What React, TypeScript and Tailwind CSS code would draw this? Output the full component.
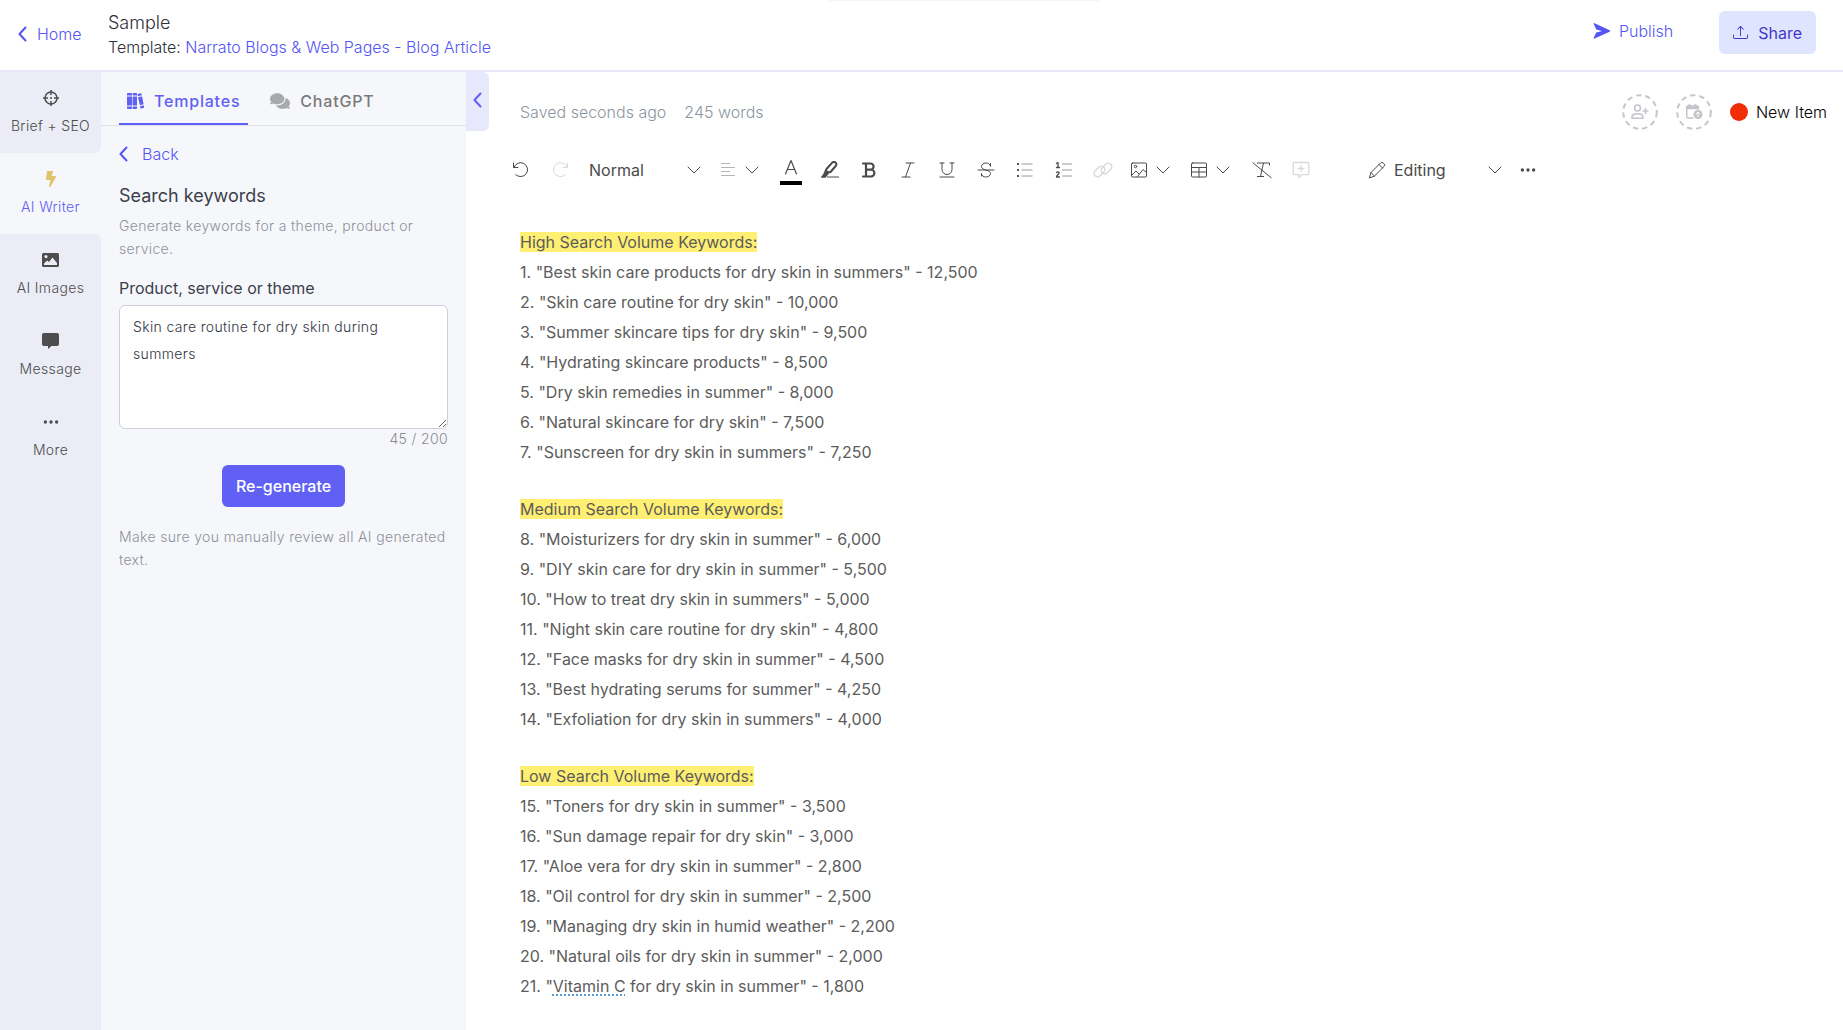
import { useState, type ReactNode } from 'react';
import { FaBolt, FaComments } from 'react-icons/fa';
import { BsUpload, BsThreeDots } from 'react-icons/bs';

type Keyword = { term: string; volume: string; flagged?: string };
type Section = { title: string; start: number; keywords: Keyword[] };

const SECTIONS: Section[] = [
  {
    title: 'High Search Volume Keywords:',
    start: 1,
    keywords: [
      { term: 'Best skin care products for dry skin in summers', volume: '12,500' },
      { term: 'Skin care routine for dry skin', volume: '10,000' },
      { term: 'Summer skincare tips for dry skin', volume: '9,500' },
      { term: 'Hydrating skincare products', volume: '8,500' },
      { term: 'Dry skin remedies in summer', volume: '8,000' },
      { term: 'Natural skincare for dry skin', volume: '7,500' },
      { term: 'Sunscreen for dry skin in summers', volume: '7,250' },
    ],
  },
  {
    title: 'Medium Search Volume Keywords:',
    start: 8,
    keywords: [
      { term: 'Moisturizers for dry skin in summer', volume: '6,000' },
      { term: 'DIY skin care for dry skin in summer', volume: '5,500' },
      { term: 'How to treat dry skin in summers', volume: '5,000' },
      { term: 'Night skin care routine for dry skin', volume: '4,800' },
      { term: 'Face masks for dry skin in summer', volume: '4,500' },
      { term: 'Best hydrating serums for summer', volume: '4,250' },
      { term: 'Exfoliation for dry skin in summers', volume: '4,000' },
    ],
  },
  {
    title: 'Low Search Volume Keywords:',
    start: 15,
    keywords: [
      { term: 'Toners for dry skin in summer', volume: '3,500' },
      { term: 'Sun damage repair for dry skin', volume: '3,000' },
      { term: 'Aloe vera for dry skin in summer', volume: '2,800' },
      { term: 'Oil control for dry skin in summer', volume: '2,500' },
      { term: 'Managing dry skin in humid weather', volume: '2,200' },
      { term: 'Natural oils for dry skin in summer', volume: '2,000' },
      { term: ' for dry skin in summer', volume: '1,800', flagged: 'Vitamin C' },
    ],
  },
];

type IconProps = { className?: string; children?: ReactNode };

// Thin 18px outline icon used all over the toolbar
function Line({ className = '', children }: IconProps) {
  return (
    <svg
      viewBox="0 0 18 18"
      className={`size-[18px] shrink-0 ${className}`}
      fill="none"
      stroke="currentColor"
      strokeLinecap="round"
      strokeLinejoin="round"
      aria-hidden="true"
    >
      {children}
    </svg>
  );
}

function ChevronLeft() {
  return (
    <svg viewBox="0 0 9 16" className="h-4 w-[9px] shrink-0" fill="none" stroke="currentColor" strokeWidth="2" strokeLinecap="round" strokeLinejoin="round" aria-hidden="true">
      <path d="M7.5 1.500 1.500 8l6 6.500" />
    </svg>
  );
}

function ChevronDown({ className = '' }: IconProps) {
  return (
    <svg viewBox="0 0 14 8" className={`h-2 w-[14px] shrink-0 pointer-events-none ${className}`} fill="none" stroke="currentColor" strokeLinecap="round" strokeLinejoin="round" aria-hidden="true">
      <path d="m1 1 6 6 6-6" />
    </svg>
  );
}

function CrosshairIcon() {
  return (
    <svg viewBox="0 0 16 16" className="size-4" fill="none" stroke="currentColor" strokeWidth="1.500" aria-hidden="true">
      <circle cx="8" cy="8" r="6" />
      <path d="M8 0v5M8 11v5M0 8h5M11 8h5" />
      <circle cx="8" cy="8" r="1" fill="currentColor" stroke="none" />
    </svg>
  );
}

function PictureIcon() {
  return (
    <svg viewBox="0 0 17 14" className="h-[14px] w-[17px]" fill="currentColor" aria-hidden="true">
      <path
        fillRule="evenodd"
        d="M1.500 0h14c.8 0 1.500.700 1.500 1.500v11c0 .8-.7 1.500-1.500 1.500h-14C.7 14 0 13.300 0 12.500v-11C0 .7.700 0 1.500 0zM4 2a1.600 1.600 0 1 0 0 3.200A1.600 1.600 0 0 0 4 2zM2 12h13v-2l-4.500-5.500-3.500 4.500-2-1.500L2 10.500z"
      />
    </svg>
  );
}

function BooksIcon() {
  return (
    <svg viewBox="0 0 17 16" className="h-4 w-[17px]" fill="currentColor" aria-hidden="true">
      <path d="M0 .8C0 .3.3 0 .8 0h3.4c.4 0 .8.3.8.8V2.400H0zM0 3.400h5v9.200H0zM0 13.600h5v1.600c0 .5-.4.800-.8.800H.8c-.5 0-.8-.3-.8-.8z" />
      <path d="M5.600.8c0-.5.3-.8.8-.8h2.800c.5 0 .8.3.8.8v1.600H5.600zM5.600 3.400H10v9.200H5.600zM5.600 13.600H10v1.600c0 .5-.3.800-.8.800H6.400c-.5 0-.8-.3-.8-.8z" />
      <path d="M10.600 1.100 13.600.3c.4-.1.8.1.9.5l.4 1.500-4.100 1zM11 4.300l4.100-1 1.500 8-3.700 1zM13.100 13.300l3.600-1 .3 1.700c.1.500-.1.900-.5 1l-2.200.600c-.4.100-.8-.1-.9-.5z" />
    </svg>
  );
}

function SendIcon() {
  return (
    <svg viewBox="0 0 18 16" className="h-4 w-[18px]" fill="currentColor" aria-hidden="true">
      <path d="M.7 1.100C.4.400.9 0 1.600.300l15 6.900c.7.300.7 1.200 0 1.500l-15 6.900c-.7.300-1.200-.1-.9-.8L3.300 9.400 9 8 3.300 6.600z" />
    </svg>
  );
}

function MessageIcon() {
  return (
    <svg viewBox="0 0 17 16" className="h-4 w-[17px]" fill="currentColor" aria-hidden="true">
      <path d="M2 0h13c1.100 0 2 .9 2 2v9c0 1.100-.9 2-2 2h-5.500L6 16v-3H2c-1.100 0-2-.9-2-2V2C0 .9.900 0 2 0z" />
    </svg>
  );
}

function PersonAddIcon() {
  return (
    <svg viewBox="0 0 18 16" className="h-4 w-[18px]" fill="none" stroke="currentColor" strokeWidth="1.600" aria-hidden="true">
      <circle cx="6.500" cy="4" r="3" />
      <path d="M1 14.200v-1C1 11 3 9.800 6.500 9.800s5.500 1.200 5.500 3.400v1zM14.500 4v6M11.500 7h6" />
    </svg>
  );
}

function CalendarIcon() {
  return (
    <svg viewBox="0 0 18 16" className="h-4 w-[18px]" aria-hidden="true">
      <path d="M8.500 14H3c-.8 0-1.300-.5-1.300-1.300V3.200C1.700 2.400 2.200 2 3 2h9c.8 0 1.300.400 1.300 1.200v2.300" fill="none" stroke="currentColor" strokeWidth="1.500" />
      <path d="M1.700 1.800h11.600v3.400H1.700zM3.700 0h1.600v3H3.700zM9.700 0h1.600v3H9.700z" fill="currentColor" />
      <circle cx="13" cy="10.500" r="4.500" fill="currentColor" />
      <path d="M13 8v5M11 10l2-2 2 2" fill="none" stroke="white" strokeWidth="1" />
    </svg>
  );
}

function DashedButton({ label, children }: { label: string; children: ReactNode }) {
  return (
    <button type="button" aria-label={label} className="grid size-9 place-items-center text-[#c4c4ca]">
      <svg viewBox="0 0 36 36" className="col-start-1 row-start-1 size-9" fill="none" stroke="#c6c6c6" strokeWidth="2" strokeDasharray="5.340 4" aria-hidden="true">
        <circle cx="18" cy="18" r="16.800" />
      </svg>
      <span className="col-start-1 row-start-1">{children}</span>
    </button>
  );
}

function ToolButton({ label, muted = false, children }: { label: string; muted?: boolean; children: ReactNode }) {
  return (
    <button
      type="button"
      aria-label={label}
      className={`flex h-9 w-[39px] shrink-0 items-center justify-center ${muted ? 'text-[#d9d9d9]' : 'text-[#4a4a4a]'}`}
    >
      {children}
    </button>
  );
}

function ToolMenu({ label, children }: { label: string; children: ReactNode }) {
  return (
    <button type="button" aria-label={label} className="flex h-9 w-[60px] shrink-0 items-center gap-2 pl-2 text-[#4a4a4a]">
      {children}
      <ChevronDown />
    </button>
  );
}

function Toolbar() {
  return (
    <div role="toolbar" aria-label="Formatting" className="flex items-center pl-3 text-[#4a4a4a]">
      <ToolButton label="Undo">
        <Line>
          <path d="M1.500 2v4.500H6M2 6.200A7 7 0 1 1 3.800 13.800" />
        </Line>
      </ToolButton>
      <ToolButton label="Redo" muted>
        <Line>
          <path d="M16.500 2v4.500H12M16 6.200A7 7 0 1 0 14.200 13.800" />
        </Line>
      </ToolButton>
      <div className="grid w-[132px] shrink-0 items-center">
        <select aria-label="Paragraph style" className="col-start-1 row-start-1 h-9 appearance-none bg-transparent pl-[10px] text-base">
          <option>Normal</option>
        </select>
        <ChevronDown className="col-start-1 row-start-1 mr-[10px] justify-self-end" />
      </div>
      <ToolMenu label="Align">
        <Line className="text-[#b5b5b5]">
          <path d="M2 2.500h9M2 6.500h14M2 10.500h9M2 14.500h14" strokeLinecap="butt" />
        </Line>
      </ToolMenu>
      <ToolButton label="Text color">
        <span className="flex flex-col items-center gap-1">
          <Line className="mt-1">
            <path d="M3.500 15 9 1.500 14.500 15M5.500 10.500h7" strokeWidth="1.200" />
          </Line>
          <span className="h-1 w-[22px] bg-black" />
        </span>
      </ToolButton>
      <ToolButton label="Highlight">
        <Line>
          <path d="M5.500 8 11 1.800c1.200-1.200 2.300-1.200 3.500-.2s1.200 2.200.2 3.400L9.500 11l-4 .500-1-1z" strokeWidth="2" />
          <path d="M4.500 9 2.500 13 0 16.500h4.500l4-5z" fill="currentColor" strokeWidth=".5" />
          <path d="M6 16h12" strokeLinecap="butt" />
        </Line>
      </ToolButton>
      <ToolButton label="Bold">
        <Line>
          <path d="M3 2.500h7.500a3.100 3.100 0 0 1 0 6.200H6M6 2.500v13M3 15.500h8a3.400 3.400 0 0 0 0-6.800" strokeWidth="2.200" />
        </Line>
      </ToolButton>
      <ToolButton label="Italic">
        <Line>
          <path d="M7 2h8M3 16h8M11.500 2 6.500 16" />
        </Line>
      </ToolButton>
      <ToolButton label="Underline">
        <Line>
          <path d="M2 2h4M12 2h4M4 2v6.500a5 5 0 0 0 10 0V2M2 16h14" />
        </Line>
      </ToolButton>
      <ToolButton label="Strikethrough">
        <Line>
          <path d="M13.500 5V2.500M13.500 5C13 3 11 2 9 2 6.500 2 4.500 3.300 4.500 5.500c0 2 2 2.800 4.500 3.500s4.500 1.500 4.500 3.500S11.500 16 9 16s-4.500-1.200-4.500-3.500V15M1 9h16" />
        </Line>
      </ToolButton>
      <ToolButton label="Bulleted list">
        <Line>
          <path d="M2 2v2M2 8v2M2 14v2" stroke="#555555" strokeWidth="2" strokeLinecap="butt" />
          <path d="M5.500 3h11M5.500 9h11M5.500 15h11" stroke="#bdbdbd" strokeWidth="1.500" strokeLinecap="butt" />
        </Line>
      </ToolButton>
      <ToolButton label="Numbered list">
        <Line>
          <path d="M1.500 2.500 3 1.500v5M1.500 6.500h3M1.500 11.500c.5-1 2.700-1 2.700.3 0 1.200-2.700 2.500-2.700 4.200h3" strokeWidth="1.300" />
          <path d="M7 3h10M7 9h10M7 15h10" stroke="#bdbdbd" strokeWidth="1.500" strokeLinecap="butt" />
        </Line>
      </ToolButton>
      <ToolButton label="Insert link" muted>
        <svg viewBox="0 0 20 18" className="h-[18px] w-5" fill="none" stroke="currentColor" strokeWidth="1.500" aria-hidden="true">
          <rect x="-6" y="-3.500" width="12" height="7" rx="3.500" transform="translate(6.500 10.500) rotate(-45)" />
          <rect x="-6" y="-3.500" width="12" height="7" rx="3.500" transform="translate(13.500 7.500) rotate(-45)" />
        </svg>
      </ToolButton>
      <ToolMenu label="Insert image">
        <Line>
          <rect x="1.500" y="2" width="15" height="14" rx="1" />
          <circle cx="5.500" cy="5.500" r="1.200" />
          <path d="m2 14 4-4 3 3M7.500 15.500 13 8.500l3.500 3" />
        </Line>
      </ToolMenu>
      <ToolMenu label="Insert table">
        <Line>
          <rect x="1.500" y="2" width="15" height="14" rx="1" />
          <path d="M1.500 6.500h15M1.500 11h15M9 6.500V16" />
        </Line>
      </ToolMenu>
      <ToolButton label="Clear formatting">
        <svg viewBox="0 0 20 18" className="h-[18px] w-5" fill="none" stroke="currentColor" aria-hidden="true">
          <path d="M5 2h12.500v2.500M11.500 2 8.500 15.500M5 15.500h7M.500 1.500l19 15.500" />
        </svg>
      </ToolButton>
      <ToolButton label="Add comment" muted>
        <Line>
          <path d="M2 1.500h14a.8.800 0 0 1 .8.800v10.500a.8.800 0 0 1-.8.800h-6L7 16.500v-2.900H2a.8.800 0 0 1-.8-.8V2.300a.8.800 0 0 1 .8-.8zM9 4.500v6M6 7.500h6" strokeWidth="1.300" />
        </Line>
      </ToolButton>
      <div className="ml-12 flex w-[140px] shrink-0 items-center gap-2">
        <Line>
          <path d="M1.500 16.500 3 11.500 12.500 2a1.800 1.800 0 0 1 2.700 0l.8.800a1.800 1.800 0 0 1 0 2.700L6.500 15zM11 3.500 14.500 7M3 11.500 6.500 15" />
        </Line>
        <div className="grid flex-1 items-center">
          <select aria-label="Editing mode" className="col-start-1 row-start-1 h-9 appearance-none bg-transparent text-base">
            <option>Editing</option>
          </select>
          <ChevronDown className="col-start-1 row-start-1 mr-[6px] justify-self-end" />
        </div>
      </div>
      <ToolButton label="More options">
        <BsThreeDots size={18} />
      </ToolButton>
    </div>
  );
}

type SideItem = { label: string; icon: ReactNode; shape: string };

const SIDE_ITEMS: SideItem[] = [
  { label: 'Brief + SEO', icon: <CrosshairIcon />, shape: 'bg-[#ebecf5] rounded-br-md text-[#4d4d4d]' },
  { label: 'AI Writer', icon: <FaBolt size={16} className="text-[#dfc46a]" />, shape: 'text-[#6060f5]' },
  { label: 'AI Images', icon: <PictureIcon />, shape: 'bg-[#ebecf5] rounded-tr-md text-[#4d4d4d]' },
  { label: 'Message', icon: <MessageIcon />, shape: 'bg-[#ebecf5] text-[#4d4d4d]' },
  { label: 'More', icon: <BsThreeDots size={18} />, shape: 'bg-[#ebecf5] text-[#4d4d4d]' },
];

function Header() {
  return (
    <header className="relative flex h-[72px] shrink-0 items-start border-b-2 border-[#e8e8fc] bg-white pr-[27px] font-light">
      {/* bottom edge of the notification tray tucked above the window */}
      <div className="absolute top-0 left-[45%] h-px w-[270px] bg-[#f5f5f5]" />
      <a href="#home" className="mt-[22px] flex w-[108px] shrink-0 items-center gap-[10px] pl-[18px] leading-6 text-[#5555f5]">
        <ChevronLeft />
        Home
      </a>
      <div className="mt-[11px] flex-1 leading-6 text-[#30303a]">
        <h1 className="text-lg leading-6">Sample</h1>
        <p>
          Template: <a href="#template" className="text-[#5555f5]">Narrato Blogs &amp; Web Pages - Blog Article</a>
        </p>
      </div>
      <button type="button" className="mt-[11px] mr-[46px] flex h-10 items-center gap-2 text-[#5555f5]">
        <SendIcon />
        Publish
      </button>
      <button type="button" className="mt-[11px] flex h-[43px] items-center gap-[10px] rounded-md bg-[#e0e5ff] px-[14px] font-normal text-[#4338ca]">
        <BsUpload size={15} />
        Share
      </button>
    </header>
  );
}

function WriterPanel() {
  const [text, setText] = useState('Skin care routine for dry skin during summers');

  return (
    <section className="w-[365px] shrink-0 bg-[#f6f7fb]">
      <div role="tablist" className="flex h-[54px] items-end border-b border-[#e2e3ea] pl-[18px]">
        <button type="button" role="tab" aria-selected="true" className="flex h-[53px] items-center gap-[10px] border-b-2 border-[#6060f5] px-2 pt-[6px] font-medium tracking-wider text-[#6060f5]">
          <BooksIcon />
          Templates
        </button>
        <button type="button" role="tab" aria-selected="false" className="ml-[14px] flex h-[53px] items-center gap-[10px] px-2 pt-1 font-medium tracking-wider text-[#7a7a7a]">
          <FaComments size={20} className="text-[#a8a9ad]" />
          ChatGPT
        </button>
      </div>
      <div className="px-[18px] pt-4">
        <a href="#back" className="flex items-center gap-[14px] leading-6 font-light text-[#5555f5]">
          <ChevronLeft />
          Back
        </a>
        <h2 className="mt-[18px] text-lg leading-6 text-[#3b3f4c]">Search keywords</h2>
        <p className="mt-[6px] text-sm leading-[23px] font-light tracking-wide text-[#8f919a]">Generate keywords for a theme, product or service.</p>
        <label htmlFor="theme" className="mt-4 block leading-6 text-[#3b3f4c]">Product, service or theme</label>
        <textarea
          id="theme"
          value={text}
          onChange={(e) => setText(e.target.value)}
          className="mt-[5px] block h-[124px] w-full rounded-md border border-[#cfcfd8] bg-white px-[13px] py-[7px] text-sm leading-[27px] font-light tracking-wide text-[#33363f]"
        />
        <p className="text-right text-sm leading-5 font-light tracking-wide text-[#8a8a90]">{text.length} / 200</p>
        <div className="mt-4 flex justify-center">
          <button type="button" className="h-[42px] rounded-md bg-[#6060f5] px-[14px] font-medium text-white">Re-generate</button>
        </div>
        <p className="mt-[18px] text-sm leading-[23px] font-light tracking-wide text-[#8f919a]">Make sure you manually review all AI generated text.</p>
      </div>
    </section>
  );
}

export default function App() {
  return (
    <div className="flex min-h-screen flex-col bg-white font-['Inter',sans-serif] text-base">
      <Header />
      <div className="flex flex-1">
        <nav className="flex w-[101px] shrink-0 flex-col bg-[#f6f7fb]">
          {SIDE_ITEMS.map((item) => (
            <button key={item.label} type="button" className={`flex h-[81px] flex-col items-center gap-2 pt-4 text-sm leading-5 font-light tracking-wide ${item.shape}`}>
              <span className="flex h-5 items-center">{item.icon}</span>
              {item.label}
            </button>
          ))}
          <div className="flex-1 bg-[#ebecf5]" />
        </nav>
        <WriterPanel />
        <button type="button" aria-label="Collapse panel" className="flex h-[59px] w-[23px] shrink-0 items-center justify-center rounded-r-md bg-[#e8e8fc] pb-1 text-[#6060f5]">
          <ChevronLeft />
        </button>

        <main className="min-w-0 flex-1">
          <div className="flex h-20 items-center pr-4 pl-[31px] font-light">
            <p className="text-[#8d95a1]">Saved seconds ago</p>
            <p className="ml-[18px] flex-1 text-[#8d95a1]">245 words</p>
            <DashedButton label="Assign people">
              <PersonAddIcon />
            </DashedButton>
            <span className="w-[18px]" />
            <DashedButton label="Set due date">
              <CalendarIcon />
            </DashedButton>
            <span className="ml-[18px] size-[18px] rounded-full bg-[#f02d06]" />
            <span className="ml-2 text-black">New Item</span>
          </div>
          <Toolbar />
          <article className="flex flex-col gap-[27px] pt-[39px] pl-[31px] leading-[30px] text-[#5c5c5c]">
            {SECTIONS.map((section) => (
              <section key={section.title}>
                <h3>
                  <mark className="bg-[#ffef73] text-[#5c5c5c]">{section.title}</mark>
                </h3>
                {section.keywords.map((k, i) => (
                  <p key={k.volume}>
                    {section.start + i}. "
                    {k.flagged && <span className="underline decoration-[#5b9bd5] decoration-dotted decoration-2 underline-offset-2">{k.flagged}</span>}
                    {k.term}" - {k.volume}
                  </p>
                ))}
              </section>
            ))}
          </article>
        </main>
      </div>
    </div>
  );
}
